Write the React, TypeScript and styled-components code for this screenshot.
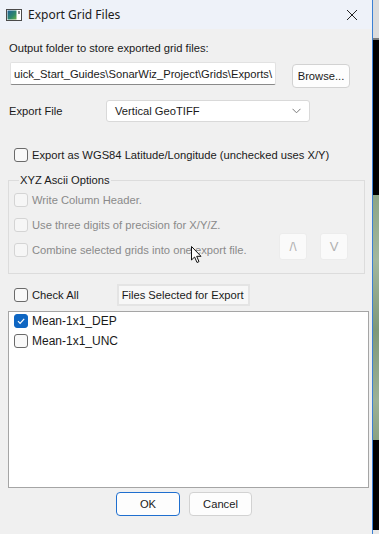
import styled, { createGlobalStyle } from "styled-components";

const GlobalStyle = createGlobalStyle`
  html, body {
    margin: 0;
    padding: 0;
    background: #000;
  }
  * {
    box-sizing: border-box;
  }
`;

const Screen = styled.div`
  width: 379px;
  height: 534px;
  display: flex;
  overflow: hidden;
`;

const Dialog = styled.div`
  width: 373px;
  height: 534px;
  display: flex;
  flex-direction: column;
  background: #f0f0f0;
  border-right: 1px solid #3b80d4;
  font-family: "Liberation Sans", Arial, sans-serif;
  font-size: 11.2px;
  color: #1a1a1a;
`;

// what shows of the window behind the dialog
const Backdrop = styled.div`
  flex: 1;
  background: linear-gradient(
    to bottom,
    #dcdcdc 0,
    #dcdcdc 38px,
    #7a7a7a 38px,
    #7a7a7a 40px,
    #000 40px,
    #000 195px,
    #8da585 195px,
    #a3b79d 260px,
    #7f9878 330px,
    #9cb196 400px,
    #8aa282 440px,
    #000 440px,
    #000 530px,
    #e8e8e8 530px
  );
`;

const TitleBar = styled.div`
  height: 29px;
  flex-shrink: 0;
  display: flex;
  align-items: center;
  padding: 0 14px 0 6px;
  background: #eef2f9;
`;

const TitleText = styled.span`
  flex: 1;
  margin-left: 6px;
  font-family: "Noto Sans", "Liberation Sans", sans-serif;
  font-size: 12px;
  color: #1b1b1b;
`;

const Body = styled.div`
  flex: 1;
  display: flex;
  flex-direction: column;
  padding: 0 8px 0 8px;
`;

const Label = styled.div<{ $top?: number }>`
  margin-top: ${(p) => p.$top ?? 0}px;
  height: 16px;
  line-height: 16px;
  padding-left: 1px;
`;

const Row = styled.div<{ $top: number; $h: number }>`
  margin-top: ${(p) => p.$top}px;
  height: ${(p) => p.$h}px;
  display: flex;
  align-items: center;
`;

const PathBox = styled.div`
  width: 266px;
  height: 23px;
  margin-left: 2px;
  align-self: flex-start;
  background: #fff;
  border: 1px solid #e2e2e2;
  border-bottom-color: #8a8a8a;
  border-radius: 2px;
  display: flex;
  align-items: center;
  justify-content: flex-end;
  padding-right: 3px;
  overflow: hidden;
  white-space: nowrap;
`;

const PushButton = styled.button<{ $w: number; $default?: boolean }>`
  width: ${(p) => p.$w}px;
  height: 24px;
  padding: 0;
  background: #fdfdfd;
  border: 1px solid ${(p) => (p.$default ? "#1f6fcf" : "#d2d2d2")};
  border-radius: 4px;
  font-family: inherit;
  font-size: 11.2px;
  color: #1a1a1a;
`;

const FieldName = styled.span`
  width: 98px;
  padding-left: 1px;
`;

const Select = styled.div`
  width: 204px;
  height: 22px;
  background: #fff;
  border: 1px solid #d9d9d9;
  border-radius: 3px;
  display: flex;
  align-items: center;
  justify-content: space-between;
  padding: 0 8px 0 8px;
`;

const Box = styled.span<{ $state: "on" | "off" | "disabled" }>`
  width: 14px;
  height: 14px;
  flex-shrink: 0;
  border-radius: 3px;
  display: inline-flex;
  align-items: center;
  justify-content: center;
  background: ${(p) =>
    p.$state === "on" ? "#0f66c2" : p.$state === "disabled" ? "#f6f6f6" : "#f9f9f9"};
  border: 1px solid
    ${(p) =>
      p.$state === "on" ? "#0f66c2" : p.$state === "disabled" ? "#d4d4d4" : "#6a6a6a"};
`;

const CheckLine = styled.label<{ $disabled?: boolean }>`
  display: flex;
  align-items: center;
  gap: 4px;
  white-space: nowrap;
  color: ${(p) => (p.$disabled ? "#8a8a8a" : "#1a1a1a")};
`;

const Group = styled.fieldset`
  margin: 10px 0 0 0;
  width: 357px;
  height: 100px;
  min-width: 0;
  border: 1px solid #dcdcdc;
  padding: 0 0 0 5px;
  display: flex;
  flex-direction: column;
`;

const Legend = styled.legend`
  padding: 0 1px;
  margin-left: 5px;
  color: #1a1a1a;
`;

const GroupRow = styled.div<{ $top: number }>`
  margin-top: ${(p) => p.$top}px;
  height: 16px;
  display: flex;
  align-items: center;
`;

const ArrowButton = styled.div`
  width: 28px;
  height: 27px;
  border: 1px solid #ececec;
  border-radius: 3px;
  background: #fafafa;
  color: #b0b0b0;
  font-size: 13px;
  display: flex;
  align-items: center;
  justify-content: center;
`;

const ArrowGroup = styled.div`
  margin-left: auto;
  margin-right: 16px;
  margin-top: -7px;
  display: flex;
  gap: 13px;
`;

const Tab = styled.div`
  margin-left: 38px;
  width: 133px;
  height: 22px;
  border: 2px solid #e4e4e4;
  background: #f7f7f7;
  display: flex;
  align-items: center;
  padding-left: 3px;
  white-space: nowrap;
  color: #1a1a1a;
`;

const List = styled.div`
  margin-top: 5px;
  width: 361px;
  height: 177px;
  background: #fff;
  border: 1px solid #a5a5a5;
  display: flex;
  flex-direction: column;
  gap: 6px;
  padding: 2px 0 0 5px;
  font-size: 12px;
`;

const Footer = styled.div`
  margin-top: 4px;
  display: flex;
  gap: 9px;
  padding-left: 108px;
`;

const Cursor = styled.svg`
  position: absolute;
  left: 191px;
  top: 246px;
`;

const Checkbox = ({
  state,
  children,
}: {
  state: "on" | "off" | "disabled";
  children: React.ReactNode;
}) => (
  <CheckLine $disabled={state === "disabled"}>
    <Box $state={state}>
      {state === "on" && (
        <svg width="10" height="10" viewBox="0 0 10 10">
          <path d="M2 5.2 L4.1 7.3 L8.2 2.8" fill="none" stroke="#fff" strokeWidth="1.2" />
        </svg>
      )}
    </Box>
    {children}
  </CheckLine>
);

const App = () => {
  return (
    <>
      <GlobalStyle />
      <Screen>
        <Dialog>
          <TitleBar>
            <svg width="16" height="12" viewBox="0 0 16 12">
              <defs>
                <linearGradient id="ico" x1="0" y1="0" x2="1" y2="1">
                  <stop offset="0" stopColor="#1f5f9a" />
                  <stop offset="0.6" stopColor="#2f8a6a" />
                  <stop offset="1" stopColor="#6fb24a" />
                </linearGradient>
              </defs>
              <rect x="0.5" y="0.5" width="15" height="11" fill="#fff" stroke="#4a4a4a" />
              <rect x="1.5" y="1.5" width="9" height="9" fill="url(#ico)" />
              <rect x="12" y="2" width="2" height="3" fill="#8a8a8a" />
            </svg>
            <TitleText>Export Grid Files</TitleText>
            <svg width="12" height="12" viewBox="0 0 12 12">
              <path d="M1 1 L11 11 M11 1 L1 11" stroke="#222" strokeWidth="1" />
            </svg>
          </TitleBar>

          <Body>
            <Label $top={11}>Output folder to store exported grid files:</Label>
            <Row $top={6} $h={26}>
              <PathBox>uick_Start_Guides\SonarWiz_Project\Grids\Exports\</PathBox>
              <PushButton $w={58} style={{ marginLeft: 16, alignSelf: "flex-end" }}>
                Browse...
              </PushButton>
            </Row>
            <Row $top={12} $h={22}>
              <FieldName>Export File</FieldName>
              <Select>
                <span>Vertical GeoTIFF</span>
                <svg width="9" height="6" viewBox="0 0 9 6">
                  <path d="M0.5 0.8 L4.5 4.8 L8.5 0.8" fill="none" stroke="#7a7a7a" />
                </svg>
              </Select>
            </Row>
            <Row $top={24} $h={18} style={{ paddingLeft: 6 }}>
              <Checkbox state="off">
                Export as WGS84 Latitude/Longitude (unchecked uses X/Y)
              </Checkbox>
            </Row>

            <Group>
              <Legend>XYZ Ascii Options</Legend>
              <GroupRow $top={6}>
                <Checkbox state="disabled">Write Column Header.</Checkbox>
              </GroupRow>
              <GroupRow $top={9}>
                <Checkbox state="disabled">Use three digits of precision for X/Y/Z.</Checkbox>
              </GroupRow>
              <GroupRow $top={9}>
                <Checkbox state="disabled">Combine selected grids into one export file.</Checkbox>
                <ArrowGroup>
                  <ArrowButton>/\</ArrowButton>
                  <ArrowButton>V</ArrowButton>
                </ArrowGroup>
              </GroupRow>
            </Group>

            <Row $top={10} $h={22} style={{ paddingLeft: 6 }}>
              <Checkbox state="off">Check All</Checkbox>
              <Tab>Files Selected for Export</Tab>
            </Row>

            <List>
              <Checkbox state="on">Mean-1x1_DEP</Checkbox>
              <Checkbox state="off">Mean-1x1_UNC</Checkbox>
            </List>

            <Footer>
              <PushButton $w={64} $default>
                OK
              </PushButton>
              <PushButton $w={63}>Cancel</PushButton>
            </Footer>
          </Body>
        </Dialog>
        <Backdrop />
      </Screen>
      <Cursor width="12" height="18" viewBox="0 0 12 18">
        <path
          d="M0.5 0.5 L0.5 14 L3.6 11 L6 16.5 L8 15.6 L5.7 10.3 L10 10.3 Z"
          fill="#fff"
          stroke="#111"
          strokeWidth="1"
          strokeLinejoin="round"
        />
      </Cursor>
    </>
  );
};

export default App;
